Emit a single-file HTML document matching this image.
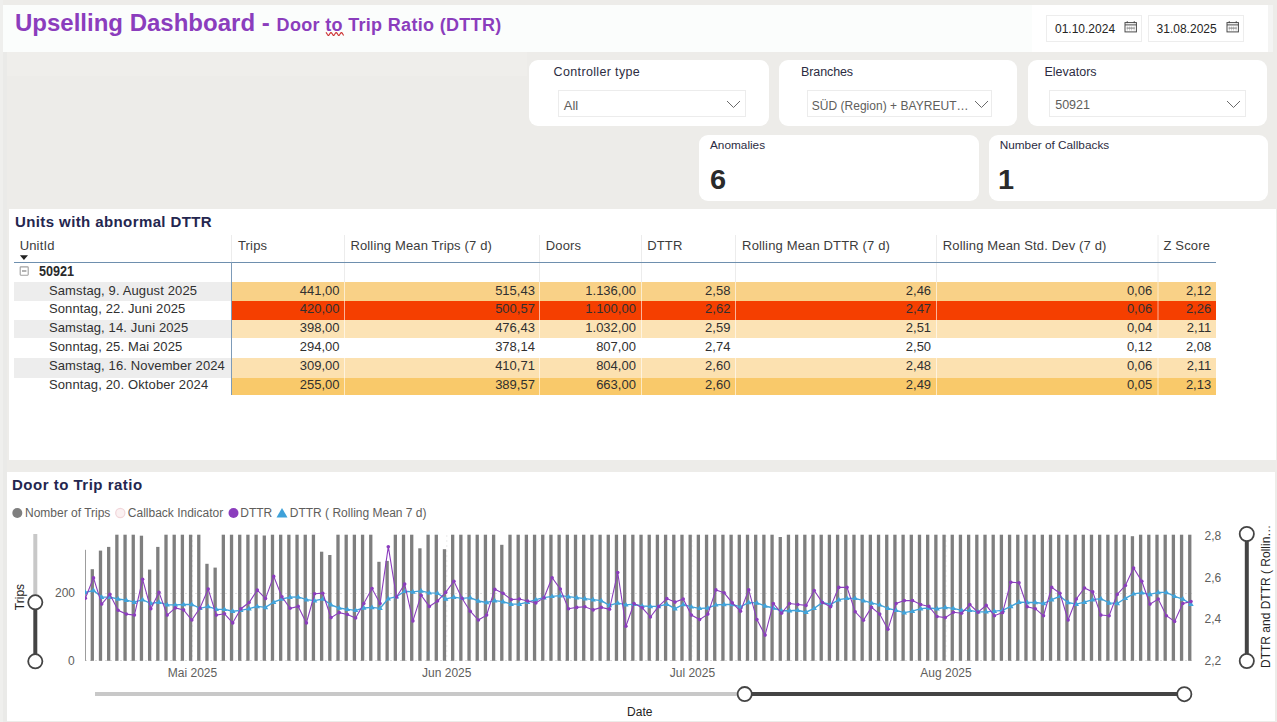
<!DOCTYPE html>
<html><head><meta charset="utf-8"><title>Upselling Dashboard</title>
<style>
html,body{margin:0;padding:0;width:1277px;height:722px;overflow:hidden;background:#edece9;font-family:"Liberation Sans",sans-serif;}
body{position:relative;}
</style></head><body>
<div style="position:absolute;left:0;top:0;width:3px;height:722px;background:#efefed"></div>
<div style="position:absolute;left:3px;top:52px;width:4px;height:670px;background:#eaeae8"></div>
<div style="position:absolute;left:7px;top:52px;width:520px;height:24px;background:#efeeeb"></div>
<div style="position:absolute;left:3px;top:5px;width:1265px;height:47px;background:#fbfdfc"></div>
<div style="position:absolute;left:1032px;top:5px;width:236px;height:47px;background:#ffffff"></div>
<div style="position:absolute;left:1268px;top:5px;width:5px;height:47px;background:#f4f4f3"></div>
<div style="position:absolute;left:15.00px;top:11.08px;font-size:24px;line-height:24px;font-weight:700;color:#8b3dbd;white-space:nowrap;">Upselling Dashboard -</div>
<div style="position:absolute;left:276.60px;top:15.66px;font-size:18px;line-height:18px;font-weight:700;color:#8b3dbd;white-space:nowrap;letter-spacing:0.32px;">Door to Trip Ratio (DTTR)</div>
<svg style="position:absolute;left:0;top:0" width="1277" height="60"><path d="M325.8 32.6 L326.20 32.76 L326.60 33.20 L327.00 33.83 L327.40 34.50 L327.80 35.05 L328.20 35.36 L328.60 35.36 L329.00 35.05 L329.40 34.50 L329.80 33.83 L330.20 33.20 L330.60 32.76 L331.00 32.60 L331.40 32.76 L331.80 33.20 L332.20 33.83 L332.60 34.50 L333.00 35.05 L333.40 35.36 L333.80 35.36 L334.20 35.05 L334.60 34.50 L335.00 33.83 L335.40 33.20 L335.80 32.76 L336.20 32.60 L336.60 32.76 L337.00 33.20 L337.40 33.83 L337.80 34.50 L338.20 35.05 L338.60 35.36 L339.00 35.36 L339.40 35.05 L339.80 34.50 L340.20 33.83 L340.60 33.20 L341.00 32.76 L341.40 32.60 L341.80 32.76 L342.20 33.20 L342.60 33.83 L343.00 34.50 L343.40 35.05 L343.80 35.36" fill="none" stroke="#cc2e2e" stroke-width="1.1"/></svg>
<div style="position:absolute;left:1046px;top:15px;width:94px;height:25px;border:1px solid #ededed;background:#fff"></div>
<div style="position:absolute;left:1055.00px;top:22.64px;font-size:12px;line-height:12px;font-weight:400;color:#252423;white-space:nowrap;">01.10.2024</div>
<svg style="position:absolute;left:1124px;top:20.5px" width="14" height="13" viewBox="0 0 14 13"><rect x="1" y="1.6" width="11.4" height="9.3" fill="none" stroke="#4a4a4a" stroke-width="1"/><line x1="1" y1="3.9" x2="12.4" y2="3.9" stroke="#4a4a4a" stroke-width="1"/><rect x="2.7" y="0.3" width="1.1" height="1.8" fill="#4a4a4a"/><rect x="9.7" y="0.3" width="1.1" height="1.8" fill="#4a4a4a"/><path d="M3.3 5.5v4M5.6 5.5v4M7.6 5.5v4M10.1 5.5v4" stroke="#b8b8b8" stroke-width="0.8"/><path d="M2.6 7.1h8.2" stroke="#8a8a8a" stroke-width="1.1"/></svg>
<div style="position:absolute;left:1147.5px;top:15px;width:94px;height:25px;border:1px solid #ededed;background:#fff"></div>
<div style="position:absolute;left:1156.60px;top:22.64px;font-size:12px;line-height:12px;font-weight:400;color:#252423;white-space:nowrap;">31.08.2025</div>
<svg style="position:absolute;left:1225.6px;top:20.5px" width="14" height="13" viewBox="0 0 14 13"><rect x="1" y="1.6" width="11.4" height="9.3" fill="none" stroke="#4a4a4a" stroke-width="1"/><line x1="1" y1="3.9" x2="12.4" y2="3.9" stroke="#4a4a4a" stroke-width="1"/><rect x="2.7" y="0.3" width="1.1" height="1.8" fill="#4a4a4a"/><rect x="9.7" y="0.3" width="1.1" height="1.8" fill="#4a4a4a"/><path d="M3.3 5.5v4M5.6 5.5v4M7.6 5.5v4M10.1 5.5v4" stroke="#b8b8b8" stroke-width="0.8"/><path d="M2.6 7.1h8.2" stroke="#8a8a8a" stroke-width="1.1"/></svg>
<div style="position:absolute;left:529px;top:60px;width:240px;height:66px;background:#fff;border-radius:9px"></div>
<div style="position:absolute;left:553.60px;top:66.42px;font-size:12.5px;line-height:12.5px;font-weight:400;color:#2c2c42;white-space:nowrap;letter-spacing:0.35px;">Controller type</div>
<div style="position:absolute;left:558px;top:89.5px;width:185.5px;height:25px;border:1px solid #ececec;background:#fff"></div>
<div style="position:absolute;left:563.80px;top:99.00px;font-size:13px;line-height:13px;font-weight:400;color:#605e5c;white-space:nowrap;letter-spacing:0px;">All</div>
<svg style="position:absolute;left:725.6px;top:100px" width="15" height="9"><path d="M1 1 L7.5 7.5 L14 1" fill="none" stroke="#6a6a6a" stroke-width="1"/></svg>
<div style="position:absolute;left:779px;top:60px;width:238px;height:66px;background:#fff;border-radius:9px"></div>
<div style="position:absolute;left:801.00px;top:66.42px;font-size:12.5px;line-height:12.5px;font-weight:400;color:#2c2c42;white-space:nowrap;letter-spacing:-0.1px;">Branches</div>
<div style="position:absolute;left:806.5px;top:89.5px;width:183.5px;height:25px;border:1px solid #ececec;background:#fff"></div>
<div style="position:absolute;left:811.70px;top:99.84px;font-size:12px;line-height:12px;font-weight:400;color:#605e5c;white-space:nowrap;letter-spacing:0.03px;">SÜD (Region) + BAYREUT…</div>
<svg style="position:absolute;left:973.6px;top:100px" width="15" height="9"><path d="M1 1 L7.5 7.5 L14 1" fill="none" stroke="#6a6a6a" stroke-width="1"/></svg>
<div style="position:absolute;left:1028px;top:60px;width:238.5px;height:66px;background:#fff;border-radius:9px"></div>
<div style="position:absolute;left:1044.50px;top:66.42px;font-size:12.5px;line-height:12.5px;font-weight:400;color:#2c2c42;white-space:nowrap;letter-spacing:0px;">Elevators</div>
<div style="position:absolute;left:1049px;top:89.5px;width:194.5px;height:25px;border:1px solid #ececec;background:#fff"></div>
<div style="position:absolute;left:1055.30px;top:99.42px;font-size:12.5px;line-height:12.5px;font-weight:400;color:#605e5c;white-space:nowrap;letter-spacing:-0.05px;">50921</div>
<svg style="position:absolute;left:1225.7px;top:100px" width="15" height="9"><path d="M1 1 L7.5 7.5 L14 1" fill="none" stroke="#6a6a6a" stroke-width="1"/></svg>
<div style="position:absolute;left:699px;top:134.6px;width:280px;height:66.2px;background:#fff;border-radius:9px"></div>
<div style="position:absolute;left:710.00px;top:139.91px;font-size:11.8px;line-height:11.8px;font-weight:400;color:#2c2c42;white-space:nowrap;">Anomalies</div>
<div style="position:absolute;left:709.80px;top:166.64px;font-size:27px;line-height:27px;font-weight:700;color:#2a2a2a;white-space:nowrap;transform:scaleX(1.07);transform-origin:0 0;">6</div>
<div style="position:absolute;left:988.7px;top:134.6px;width:279.5999999999999px;height:66.2px;background:#fff;border-radius:9px"></div>
<div style="position:absolute;left:999.70px;top:139.91px;font-size:11.8px;line-height:11.8px;font-weight:400;color:#2c2c42;white-space:nowrap;">Number of Callbacks</div>
<div style="position:absolute;left:997.80px;top:166.64px;font-size:27px;line-height:27px;font-weight:700;color:#2a2a2a;white-space:nowrap;transform:scaleX(1.07);transform-origin:0 0;">1</div>
<div style="position:absolute;left:9px;top:209px;width:1267px;height:251px;background:#fff"></div>
<div style="position:absolute;left:15.00px;top:213.70px;font-size:15px;line-height:15px;font-weight:700;color:#24264f;white-space:nowrap;letter-spacing:0.4px;">Units with abnormal DTTR</div>
<div style="position:absolute;left:19.70px;top:239.40px;font-size:13px;line-height:13px;font-weight:400;color:#3c3c3c;white-space:nowrap;letter-spacing:0.15px;">UnitId</div>
<div style="position:absolute;left:238.00px;top:239.40px;font-size:13px;line-height:13px;font-weight:400;color:#3c3c3c;white-space:nowrap;letter-spacing:0.15px;">Trips</div>
<div style="position:absolute;left:350.40px;top:239.40px;font-size:13px;line-height:13px;font-weight:400;color:#3c3c3c;white-space:nowrap;letter-spacing:0.15px;">Rolling Mean Trips (7 d)</div>
<div style="position:absolute;left:545.80px;top:239.40px;font-size:13px;line-height:13px;font-weight:400;color:#3c3c3c;white-space:nowrap;letter-spacing:0.15px;">Doors</div>
<div style="position:absolute;left:647.20px;top:239.40px;font-size:13px;line-height:13px;font-weight:400;color:#3c3c3c;white-space:nowrap;letter-spacing:0.15px;">DTTR</div>
<div style="position:absolute;left:742.10px;top:239.40px;font-size:13px;line-height:13px;font-weight:400;color:#3c3c3c;white-space:nowrap;letter-spacing:0.15px;">Rolling Mean DTTR (7 d)</div>
<div style="position:absolute;left:942.80px;top:239.40px;font-size:13px;line-height:13px;font-weight:400;color:#3c3c3c;white-space:nowrap;letter-spacing:0.15px;">Rolling Mean Std. Dev (7 d)</div>
<div style="position:absolute;left:1163.50px;top:239.40px;font-size:13px;line-height:13px;font-weight:400;color:#3c3c3c;white-space:nowrap;letter-spacing:0.15px;">Z Score</div>
<svg style="position:absolute;left:0;top:0" width="1277" height="722">
<path d="M19.9 255.2 L28 255.2 L23.95 259.9 Z" fill="#222"/>
<line x1="344.5" y1="235" x2="344.5" y2="282" stroke="#ececec" stroke-width="1"/>
<line x1="539.5" y1="235" x2="539.5" y2="282" stroke="#ececec" stroke-width="1"/>
<line x1="641.5" y1="235" x2="641.5" y2="282" stroke="#ececec" stroke-width="1"/>
<line x1="735.5" y1="235" x2="735.5" y2="282" stroke="#ececec" stroke-width="1"/>
<line x1="936.5" y1="235" x2="936.5" y2="282" stroke="#ececec" stroke-width="1"/>
<line x1="1158.0" y1="235" x2="1158.0" y2="282" stroke="#ececec" stroke-width="1"/>
<line x1="231.5" y1="235" x2="231.5" y2="263" stroke="#ececec" stroke-width="1"/>
</svg>
<div style="position:absolute;left:14px;top:282px;width:217px;height:19px;background:#ededed"></div>
<div style="position:absolute;left:232px;top:282px;width:984px;height:19px;background:#f9d187"></div>
<div style="position:absolute;left:48.90px;top:283.80px;font-size:13px;line-height:13px;font-weight:400;color:#303030;white-space:nowrap;letter-spacing:0.13px;">Samstag, 9. August 2025</div>
<div style="position:absolute;right:937.50px;text-align:right;top:283.80px;font-size:13px;line-height:13px;font-weight:400;color:#303030;white-space:nowrap;">441,00</div>
<div style="position:absolute;right:742.10px;text-align:right;top:283.80px;font-size:13px;line-height:13px;font-weight:400;color:#303030;white-space:nowrap;">515,43</div>
<div style="position:absolute;right:641.10px;text-align:right;top:283.80px;font-size:13px;line-height:13px;font-weight:400;color:#303030;white-space:nowrap;">1.136,00</div>
<div style="position:absolute;right:546.60px;text-align:right;top:283.80px;font-size:13px;line-height:13px;font-weight:400;color:#303030;white-space:nowrap;">2,58</div>
<div style="position:absolute;right:345.90px;text-align:right;top:283.80px;font-size:13px;line-height:13px;font-weight:400;color:#303030;white-space:nowrap;">2,46</div>
<div style="position:absolute;right:124.80px;text-align:right;top:283.80px;font-size:13px;line-height:13px;font-weight:400;color:#303030;white-space:nowrap;">0,06</div>
<div style="position:absolute;right:65.80px;text-align:right;top:283.80px;font-size:13px;line-height:13px;font-weight:400;color:#303030;white-space:nowrap;">2,12</div>
<div style="position:absolute;left:232px;top:301px;width:984px;height:18.5px;background:#f53f00"></div>
<div style="position:absolute;left:48.90px;top:302.20px;font-size:13px;line-height:13px;font-weight:400;color:#303030;white-space:nowrap;letter-spacing:0.13px;">Sonntag, 22. Juni 2025</div>
<div style="position:absolute;right:937.50px;text-align:right;top:302.20px;font-size:13px;line-height:13px;font-weight:400;color:#303030;white-space:nowrap;">420,00</div>
<div style="position:absolute;right:742.10px;text-align:right;top:302.20px;font-size:13px;line-height:13px;font-weight:400;color:#303030;white-space:nowrap;">500,57</div>
<div style="position:absolute;right:641.10px;text-align:right;top:302.20px;font-size:13px;line-height:13px;font-weight:400;color:#303030;white-space:nowrap;">1.100,00</div>
<div style="position:absolute;right:546.60px;text-align:right;top:302.20px;font-size:13px;line-height:13px;font-weight:400;color:#303030;white-space:nowrap;">2,62</div>
<div style="position:absolute;right:345.90px;text-align:right;top:302.20px;font-size:13px;line-height:13px;font-weight:400;color:#303030;white-space:nowrap;">2,47</div>
<div style="position:absolute;right:124.80px;text-align:right;top:302.20px;font-size:13px;line-height:13px;font-weight:400;color:#303030;white-space:nowrap;">0,06</div>
<div style="position:absolute;right:65.80px;text-align:right;top:302.20px;font-size:13px;line-height:13px;font-weight:400;color:#303030;white-space:nowrap;">2,26</div>
<div style="position:absolute;left:14px;top:319.5px;width:217px;height:18.5px;background:#ededed"></div>
<div style="position:absolute;left:232px;top:319.5px;width:984px;height:18.5px;background:#fce3b5"></div>
<div style="position:absolute;left:48.90px;top:321.30px;font-size:13px;line-height:13px;font-weight:400;color:#303030;white-space:nowrap;letter-spacing:0.13px;">Samstag, 14. Juni 2025</div>
<div style="position:absolute;right:937.50px;text-align:right;top:321.30px;font-size:13px;line-height:13px;font-weight:400;color:#303030;white-space:nowrap;">398,00</div>
<div style="position:absolute;right:742.10px;text-align:right;top:321.30px;font-size:13px;line-height:13px;font-weight:400;color:#303030;white-space:nowrap;">476,43</div>
<div style="position:absolute;right:641.10px;text-align:right;top:321.30px;font-size:13px;line-height:13px;font-weight:400;color:#303030;white-space:nowrap;">1.032,00</div>
<div style="position:absolute;right:546.60px;text-align:right;top:321.30px;font-size:13px;line-height:13px;font-weight:400;color:#303030;white-space:nowrap;">2,59</div>
<div style="position:absolute;right:345.90px;text-align:right;top:321.30px;font-size:13px;line-height:13px;font-weight:400;color:#303030;white-space:nowrap;">2,51</div>
<div style="position:absolute;right:124.80px;text-align:right;top:321.30px;font-size:13px;line-height:13px;font-weight:400;color:#303030;white-space:nowrap;">0,04</div>
<div style="position:absolute;right:65.80px;text-align:right;top:321.30px;font-size:13px;line-height:13px;font-weight:400;color:#303030;white-space:nowrap;">2,11</div>
<div style="position:absolute;left:232px;top:338px;width:984px;height:19.5px;background:#ffffff"></div>
<div style="position:absolute;left:48.90px;top:340.00px;font-size:13px;line-height:13px;font-weight:400;color:#303030;white-space:nowrap;letter-spacing:0.13px;">Sonntag, 25. Mai 2025</div>
<div style="position:absolute;right:937.50px;text-align:right;top:340.00px;font-size:13px;line-height:13px;font-weight:400;color:#303030;white-space:nowrap;">294,00</div>
<div style="position:absolute;right:742.10px;text-align:right;top:340.00px;font-size:13px;line-height:13px;font-weight:400;color:#303030;white-space:nowrap;">378,14</div>
<div style="position:absolute;right:641.10px;text-align:right;top:340.00px;font-size:13px;line-height:13px;font-weight:400;color:#303030;white-space:nowrap;">807,00</div>
<div style="position:absolute;right:546.60px;text-align:right;top:340.00px;font-size:13px;line-height:13px;font-weight:400;color:#303030;white-space:nowrap;">2,74</div>
<div style="position:absolute;right:345.90px;text-align:right;top:340.00px;font-size:13px;line-height:13px;font-weight:400;color:#303030;white-space:nowrap;">2,50</div>
<div style="position:absolute;right:124.80px;text-align:right;top:340.00px;font-size:13px;line-height:13px;font-weight:400;color:#303030;white-space:nowrap;">0,12</div>
<div style="position:absolute;right:65.80px;text-align:right;top:340.00px;font-size:13px;line-height:13px;font-weight:400;color:#303030;white-space:nowrap;">2,08</div>
<div style="position:absolute;left:14px;top:357.5px;width:217px;height:20.0px;background:#ededed"></div>
<div style="position:absolute;left:232px;top:357.5px;width:984px;height:20.0px;background:#fce1b0"></div>
<div style="position:absolute;left:48.90px;top:358.90px;font-size:13px;line-height:13px;font-weight:400;color:#303030;white-space:nowrap;letter-spacing:0.13px;">Samstag, 16. November 2024</div>
<div style="position:absolute;right:937.50px;text-align:right;top:358.90px;font-size:13px;line-height:13px;font-weight:400;color:#303030;white-space:nowrap;">309,00</div>
<div style="position:absolute;right:742.10px;text-align:right;top:358.90px;font-size:13px;line-height:13px;font-weight:400;color:#303030;white-space:nowrap;">410,71</div>
<div style="position:absolute;right:641.10px;text-align:right;top:358.90px;font-size:13px;line-height:13px;font-weight:400;color:#303030;white-space:nowrap;">804,00</div>
<div style="position:absolute;right:546.60px;text-align:right;top:358.90px;font-size:13px;line-height:13px;font-weight:400;color:#303030;white-space:nowrap;">2,60</div>
<div style="position:absolute;right:345.90px;text-align:right;top:358.90px;font-size:13px;line-height:13px;font-weight:400;color:#303030;white-space:nowrap;">2,48</div>
<div style="position:absolute;right:124.80px;text-align:right;top:358.90px;font-size:13px;line-height:13px;font-weight:400;color:#303030;white-space:nowrap;">0,06</div>
<div style="position:absolute;right:65.80px;text-align:right;top:358.90px;font-size:13px;line-height:13px;font-weight:400;color:#303030;white-space:nowrap;">2,11</div>
<div style="position:absolute;left:232px;top:377.5px;width:984px;height:17.5px;background:#f9c96a"></div>
<div style="position:absolute;left:48.90px;top:377.50px;font-size:13px;line-height:13px;font-weight:400;color:#303030;white-space:nowrap;letter-spacing:0.13px;">Sonntag, 20. Oktober 2024</div>
<div style="position:absolute;right:937.50px;text-align:right;top:377.50px;font-size:13px;line-height:13px;font-weight:400;color:#303030;white-space:nowrap;">255,00</div>
<div style="position:absolute;right:742.10px;text-align:right;top:377.50px;font-size:13px;line-height:13px;font-weight:400;color:#303030;white-space:nowrap;">389,57</div>
<div style="position:absolute;right:641.10px;text-align:right;top:377.50px;font-size:13px;line-height:13px;font-weight:400;color:#303030;white-space:nowrap;">663,00</div>
<div style="position:absolute;right:546.60px;text-align:right;top:377.50px;font-size:13px;line-height:13px;font-weight:400;color:#303030;white-space:nowrap;">2,60</div>
<div style="position:absolute;right:345.90px;text-align:right;top:377.50px;font-size:13px;line-height:13px;font-weight:400;color:#303030;white-space:nowrap;">2,49</div>
<div style="position:absolute;right:124.80px;text-align:right;top:377.50px;font-size:13px;line-height:13px;font-weight:400;color:#303030;white-space:nowrap;">0,05</div>
<div style="position:absolute;right:65.80px;text-align:right;top:377.50px;font-size:13px;line-height:13px;font-weight:400;color:#303030;white-space:nowrap;">2,13</div>
<svg style="position:absolute;left:0;top:0" width="1277" height="722">
<line x1="344.5" y1="282" x2="344.5" y2="395" stroke="#ffffff" stroke-opacity="0.6" stroke-width="1"/>
<line x1="539.5" y1="282" x2="539.5" y2="395" stroke="#ffffff" stroke-opacity="0.6" stroke-width="1"/>
<line x1="641.5" y1="282" x2="641.5" y2="395" stroke="#ffffff" stroke-opacity="0.6" stroke-width="1"/>
<line x1="735.5" y1="282" x2="735.5" y2="395" stroke="#ffffff" stroke-opacity="0.6" stroke-width="1"/>
<line x1="936.5" y1="282" x2="936.5" y2="395" stroke="#ffffff" stroke-opacity="0.6" stroke-width="1"/>
<line x1="1158.0" y1="282" x2="1158.0" y2="395" stroke="#ffffff" stroke-opacity="0.6" stroke-width="1"/>
<line x1="14" y1="262.5" x2="1216" y2="262.5" stroke="#6e8fae" stroke-width="1"/>
<line x1="231.5" y1="262" x2="231.5" y2="395" stroke="#7d9bb8" stroke-width="1"/>
<rect x="20.2" y="266.9" width="8" height="8.3" rx="0.6" fill="none" stroke="#a0a0a0" stroke-width="1.1"/><line x1="22" y1="271" x2="26.4" y2="271" stroke="#8a8a8a" stroke-width="1.3"/>
</svg>
<div style="position:absolute;left:38.60px;top:264.15px;font-size:14px;line-height:14px;font-weight:700;color:#2a2a2a;white-space:nowrap;transform:scaleX(0.9);transform-origin:0 0;">50921</div>
<div style="position:absolute;left:7px;top:472px;width:1268px;height:249px;background:#fff"></div>
<div style="position:absolute;left:12.00px;top:477.30px;font-size:15px;line-height:15px;font-weight:700;color:#24264f;white-space:nowrap;letter-spacing:0.5px;">Door to Trip ratio</div>
<svg style="position:absolute;left:0;top:0" width="1277" height="722">
<circle cx="17.3" cy="513" r="5" fill="#7f7f7f"/>
<circle cx="120.3" cy="513" r="4.6" fill="#fbf1f2" stroke="#f1d6da" stroke-width="1.2"/>
<circle cx="233.5" cy="513" r="5" fill="#8b3dbd"/>
<path d="M282 508 L287.5 517.5 L276.5 517.5 Z" fill="#3ea1d9"/>
</svg>
<div style="position:absolute;left:25.00px;top:506.54px;font-size:12px;line-height:12px;font-weight:400;color:#605e5c;white-space:nowrap;">Nomber of Trips</div>
<div style="position:absolute;left:127.80px;top:506.54px;font-size:12px;line-height:12px;font-weight:400;color:#605e5c;white-space:nowrap;">Callback Indicator</div>
<div style="position:absolute;left:240.30px;top:506.54px;font-size:12px;line-height:12px;font-weight:400;color:#605e5c;white-space:nowrap;">DTTR</div>
<div style="position:absolute;left:289.80px;top:506.54px;font-size:12px;line-height:12px;font-weight:400;color:#605e5c;white-space:nowrap;">DTTR ( Rolling Mean 7 d)</div>
<svg style="position:absolute;left:0;top:0" width="1277" height="722">
<defs><clipPath id="pc"><rect x="85" y="534.4" width="1110" height="131"/></clipPath></defs>
<line x1="85" y1="593.5" x2="1194" y2="593.5" stroke="#e0e0e0" stroke-width="1" stroke-dasharray="2,3"/>
<line x1="85" y1="660.5" x2="1192" y2="660.5" stroke="#dcdcdc" stroke-width="1" stroke-dasharray="2,3"/>
<line x1="192.5" y1="535" x2="192.5" y2="660" stroke="#ebebeb" stroke-width="1" stroke-dasharray="2,3"/>
<line x1="446.8" y1="535" x2="446.8" y2="660" stroke="#ebebeb" stroke-width="1" stroke-dasharray="2,3"/>
<line x1="692" y1="535" x2="692" y2="660" stroke="#ebebeb" stroke-width="1" stroke-dasharray="2,3"/>
<line x1="946" y1="535" x2="946" y2="660" stroke="#ebebeb" stroke-width="1" stroke-dasharray="2,3"/>
<g clip-path="url(#pc)" fill="#7f7f7f">
<rect x="82.46" y="549.8" width="3.3" height="111.0"/>
<rect x="90.65" y="569.2" width="3.3" height="91.6"/>
<rect x="98.84" y="550.6" width="3.3" height="110.2"/>
<rect x="107.03" y="546.9" width="3.3" height="113.9"/>
<rect x="115.22" y="534.4" width="3.3" height="126.4"/>
<rect x="123.41" y="534.4" width="3.3" height="126.4"/>
<rect x="131.60" y="534.4" width="3.3" height="126.4"/>
<rect x="139.79" y="535.7" width="3.3" height="125.1"/>
<rect x="147.98" y="569.6" width="3.3" height="91.2"/>
<rect x="156.17" y="546.9" width="3.3" height="113.9"/>
<rect x="164.36" y="534.4" width="3.3" height="126.4"/>
<rect x="172.55" y="534.4" width="3.3" height="126.4"/>
<rect x="180.74" y="534.4" width="3.3" height="126.4"/>
<rect x="188.93" y="534.4" width="3.3" height="126.4"/>
<rect x="197.12" y="534.4" width="3.3" height="126.4"/>
<rect x="205.31" y="563.8" width="3.3" height="97.0"/>
<rect x="213.50" y="567.6" width="3.3" height="93.2"/>
<rect x="221.69" y="534.4" width="3.3" height="126.4"/>
<rect x="229.88" y="534.4" width="3.3" height="126.4"/>
<rect x="238.07" y="534.4" width="3.3" height="126.4"/>
<rect x="246.26" y="534.4" width="3.3" height="126.4"/>
<rect x="254.45" y="534.4" width="3.3" height="126.4"/>
<rect x="262.64" y="535.5" width="3.3" height="125.3"/>
<rect x="270.83" y="534.4" width="3.3" height="126.4"/>
<rect x="279.02" y="534.4" width="3.3" height="126.4"/>
<rect x="287.21" y="534.4" width="3.3" height="126.4"/>
<rect x="295.40" y="534.4" width="3.3" height="126.4"/>
<rect x="303.59" y="534.4" width="3.3" height="126.4"/>
<rect x="311.78" y="534.4" width="3.3" height="126.4"/>
<rect x="319.97" y="551.7" width="3.3" height="109.1"/>
<rect x="328.16" y="555.0" width="3.3" height="105.8"/>
<rect x="336.35" y="534.4" width="3.3" height="126.4"/>
<rect x="344.54" y="534.4" width="3.3" height="126.4"/>
<rect x="352.73" y="534.4" width="3.3" height="126.4"/>
<rect x="360.92" y="534.4" width="3.3" height="126.4"/>
<rect x="369.11" y="534.4" width="3.3" height="126.4"/>
<rect x="377.30" y="561.8" width="3.3" height="99.0"/>
<rect x="385.49" y="560.9" width="3.3" height="99.9"/>
<rect x="393.68" y="534.4" width="3.3" height="126.4"/>
<rect x="401.87" y="534.4" width="3.3" height="126.4"/>
<rect x="410.06" y="534.4" width="3.3" height="126.4"/>
<rect x="418.25" y="548.3" width="3.3" height="112.5"/>
<rect x="426.44" y="534.4" width="3.3" height="126.4"/>
<rect x="434.63" y="534.4" width="3.3" height="126.4"/>
<rect x="442.82" y="549.2" width="3.3" height="111.6"/>
<rect x="451.01" y="534.4" width="3.3" height="126.4"/>
<rect x="459.20" y="534.4" width="3.3" height="126.4"/>
<rect x="467.39" y="534.4" width="3.3" height="126.4"/>
<rect x="475.58" y="534.4" width="3.3" height="126.4"/>
<rect x="483.77" y="534.4" width="3.3" height="126.4"/>
<rect x="491.96" y="534.4" width="3.3" height="126.4"/>
<rect x="500.15" y="544.8" width="3.3" height="116.0"/>
<rect x="508.34" y="534.4" width="3.3" height="126.4"/>
<rect x="516.53" y="534.4" width="3.3" height="126.4"/>
<rect x="524.72" y="534.4" width="3.3" height="126.4"/>
<rect x="532.91" y="534.4" width="3.3" height="126.4"/>
<rect x="541.10" y="534.4" width="3.3" height="126.4"/>
<rect x="549.29" y="534.4" width="3.3" height="126.4"/>
<rect x="557.48" y="534.4" width="3.3" height="126.4"/>
<rect x="565.67" y="534.4" width="3.3" height="126.4"/>
<rect x="573.86" y="534.4" width="3.3" height="126.4"/>
<rect x="582.05" y="534.4" width="3.3" height="126.4"/>
<rect x="590.24" y="534.4" width="3.3" height="126.4"/>
<rect x="598.43" y="534.4" width="3.3" height="126.4"/>
<rect x="606.62" y="534.4" width="3.3" height="126.4"/>
<rect x="614.81" y="534.4" width="3.3" height="126.4"/>
<rect x="623.00" y="534.4" width="3.3" height="126.4"/>
<rect x="631.19" y="534.4" width="3.3" height="126.4"/>
<rect x="639.38" y="534.4" width="3.3" height="126.4"/>
<rect x="647.57" y="534.4" width="3.3" height="126.4"/>
<rect x="655.76" y="534.4" width="3.3" height="126.4"/>
<rect x="663.95" y="534.4" width="3.3" height="126.4"/>
<rect x="672.14" y="534.4" width="3.3" height="126.4"/>
<rect x="680.33" y="534.4" width="3.3" height="126.4"/>
<rect x="688.52" y="534.4" width="3.3" height="126.4"/>
<rect x="696.71" y="534.4" width="3.3" height="126.4"/>
<rect x="704.90" y="534.4" width="3.3" height="126.4"/>
<rect x="713.09" y="534.4" width="3.3" height="126.4"/>
<rect x="721.28" y="534.4" width="3.3" height="126.4"/>
<rect x="729.47" y="534.4" width="3.3" height="126.4"/>
<rect x="737.66" y="534.4" width="3.3" height="126.4"/>
<rect x="745.85" y="534.4" width="3.3" height="126.4"/>
<rect x="754.04" y="534.4" width="3.3" height="126.4"/>
<rect x="762.23" y="534.4" width="3.3" height="126.4"/>
<rect x="770.42" y="534.4" width="3.3" height="126.4"/>
<rect x="778.61" y="537.0" width="3.3" height="123.8"/>
<rect x="786.80" y="534.4" width="3.3" height="126.4"/>
<rect x="794.99" y="534.4" width="3.3" height="126.4"/>
<rect x="803.18" y="534.4" width="3.3" height="126.4"/>
<rect x="811.37" y="534.4" width="3.3" height="126.4"/>
<rect x="819.56" y="534.4" width="3.3" height="126.4"/>
<rect x="827.75" y="534.4" width="3.3" height="126.4"/>
<rect x="835.94" y="534.4" width="3.3" height="126.4"/>
<rect x="844.13" y="534.4" width="3.3" height="126.4"/>
<rect x="852.32" y="534.4" width="3.3" height="126.4"/>
<rect x="860.51" y="534.4" width="3.3" height="126.4"/>
<rect x="868.70" y="534.4" width="3.3" height="126.4"/>
<rect x="876.89" y="534.4" width="3.3" height="126.4"/>
<rect x="885.08" y="534.4" width="3.3" height="126.4"/>
<rect x="893.27" y="534.4" width="3.3" height="126.4"/>
<rect x="901.46" y="534.4" width="3.3" height="126.4"/>
<rect x="909.65" y="534.4" width="3.3" height="126.4"/>
<rect x="917.84" y="534.4" width="3.3" height="126.4"/>
<rect x="926.03" y="534.4" width="3.3" height="126.4"/>
<rect x="934.22" y="534.4" width="3.3" height="126.4"/>
<rect x="942.41" y="534.4" width="3.3" height="126.4"/>
<rect x="950.60" y="534.4" width="3.3" height="126.4"/>
<rect x="958.79" y="534.4" width="3.3" height="126.4"/>
<rect x="966.98" y="534.4" width="3.3" height="126.4"/>
<rect x="975.17" y="534.4" width="3.3" height="126.4"/>
<rect x="983.36" y="534.4" width="3.3" height="126.4"/>
<rect x="991.55" y="534.4" width="3.3" height="126.4"/>
<rect x="999.74" y="534.4" width="3.3" height="126.4"/>
<rect x="1007.93" y="534.4" width="3.3" height="126.4"/>
<rect x="1016.12" y="534.4" width="3.3" height="126.4"/>
<rect x="1024.31" y="534.4" width="3.3" height="126.4"/>
<rect x="1032.50" y="534.4" width="3.3" height="126.4"/>
<rect x="1040.69" y="534.4" width="3.3" height="126.4"/>
<rect x="1048.88" y="534.4" width="3.3" height="126.4"/>
<rect x="1057.07" y="534.4" width="3.3" height="126.4"/>
<rect x="1065.26" y="534.4" width="3.3" height="126.4"/>
<rect x="1073.45" y="534.4" width="3.3" height="126.4"/>
<rect x="1081.64" y="534.4" width="3.3" height="126.4"/>
<rect x="1089.83" y="534.4" width="3.3" height="126.4"/>
<rect x="1098.02" y="534.4" width="3.3" height="126.4"/>
<rect x="1106.21" y="534.4" width="3.3" height="126.4"/>
<rect x="1114.40" y="534.4" width="3.3" height="126.4"/>
<rect x="1122.59" y="534.4" width="3.3" height="126.4"/>
<rect x="1130.78" y="536.2" width="3.3" height="124.6"/>
<rect x="1138.97" y="534.4" width="3.3" height="126.4"/>
<rect x="1147.16" y="534.4" width="3.3" height="126.4"/>
<rect x="1155.35" y="534.4" width="3.3" height="126.4"/>
<rect x="1163.54" y="534.4" width="3.3" height="126.4"/>
<rect x="1171.73" y="534.4" width="3.3" height="126.4"/>
<rect x="1179.92" y="534.4" width="3.3" height="126.4"/>
<rect x="1188.11" y="534.4" width="3.3" height="126.4"/>
</g>
<g clip-path="url(#pc)">
<polyline points="85.3,592.4 93.5,590.5 101.7,597.1 109.9,597.1 118.1,599.0 126.3,600.2 134.4,602.1 142.6,599.6 150.8,603.5 159.0,602.1 167.2,604.8 175.4,604.8 183.6,604.5 191.8,604.5 200.0,608.3 208.2,606.4 216.3,609.3 224.5,609.3 232.7,611.2 240.9,610.3 249.1,608.7 257.3,606.4 265.5,607.4 273.7,602.1 281.9,599.0 290.1,597.1 298.2,596.9 306.4,599.6 314.6,600.6 322.8,599.0 331.0,604.8 339.2,608.0 347.4,609.3 355.6,610.3 363.8,608.0 372.0,607.4 380.1,608.3 388.3,598.6 396.5,596.7 404.7,591.3 412.9,591.9 421.1,590.9 429.3,592.8 437.5,593.2 445.7,599.0 453.9,597.1 462.0,598.3 470.2,597.7 478.4,601.0 486.6,602.5 494.8,600.6 503.0,601.6 511.2,604.1 519.4,604.1 527.6,602.1 535.8,599.6 544.0,597.7 552.1,596.3 560.3,595.7 568.5,596.7 576.7,597.7 584.9,598.6 593.1,599.6 601.3,600.6 609.5,605.4 617.7,602.9 625.9,604.8 634.0,604.1 642.2,606.0 650.4,606.4 658.6,606.4 666.8,604.1 675.0,608.7 683.2,604.5 691.4,606.8 699.6,608.3 707.8,608.0 715.9,604.8 724.1,604.5 732.3,604.5 740.5,606.8 748.7,602.5 756.9,602.9 765.1,606.0 773.3,608.0 781.5,610.7 789.6,610.7 797.8,610.3 806.0,612.2 814.2,608.3 822.4,602.5 830.6,604.5 838.8,599.6 847.0,598.3 855.2,598.3 863.4,600.6 871.5,602.9 879.7,604.8 887.9,608.3 896.1,610.3 904.3,612.6 912.5,611.2 920.7,608.7 928.9,608.0 937.1,608.7 945.3,607.4 953.4,608.3 961.6,610.3 969.8,610.3 978.0,611.8 986.2,611.8 994.4,611.2 1002.6,610.3 1010.8,606.4 1019.0,602.1 1027.2,602.5 1035.3,602.5 1043.5,603.5 1051.7,599.6 1059.9,596.3 1068.1,602.5 1076.3,604.1 1084.5,602.1 1092.7,599.6 1100.9,598.6 1109.1,602.9 1117.2,603.5 1125.4,598.3 1133.6,593.8 1141.8,592.8 1150.0,594.4 1158.2,592.4 1166.4,592.4 1174.6,596.3 1182.8,599.0 1191.0,604.1" fill="none" stroke="#41a3da" stroke-width="1.35"/>
<path d="M85.3 589.5 L88.0 594.2 L82.6 594.2 Z" fill="#41a3da"/>
<path d="M93.5 587.6 L96.2 592.3 L90.8 592.3 Z" fill="#41a3da"/>
<path d="M101.7 594.2 L104.4 598.9 L99.0 598.9 Z" fill="#41a3da"/>
<path d="M109.9 594.2 L112.6 598.9 L107.2 598.9 Z" fill="#41a3da"/>
<path d="M118.1 596.1 L120.8 600.8 L115.4 600.8 Z" fill="#41a3da"/>
<path d="M126.3 597.3 L129.0 602.0 L123.6 602.0 Z" fill="#41a3da"/>
<path d="M134.4 599.2 L137.1 603.9 L131.8 603.9 Z" fill="#41a3da"/>
<path d="M142.6 596.7 L145.3 601.4 L139.9 601.4 Z" fill="#41a3da"/>
<path d="M150.8 600.6 L153.5 605.3 L148.1 605.3 Z" fill="#41a3da"/>
<path d="M159.0 599.2 L161.7 603.9 L156.3 603.9 Z" fill="#41a3da"/>
<path d="M167.2 601.9 L169.9 606.6 L164.5 606.6 Z" fill="#41a3da"/>
<path d="M175.4 601.9 L178.1 606.6 L172.7 606.6 Z" fill="#41a3da"/>
<path d="M183.6 601.6 L186.3 606.3 L180.9 606.3 Z" fill="#41a3da"/>
<path d="M191.8 601.6 L194.5 606.3 L189.1 606.3 Z" fill="#41a3da"/>
<path d="M200.0 605.4 L202.7 610.1 L197.3 610.1 Z" fill="#41a3da"/>
<path d="M208.2 603.5 L210.9 608.2 L205.5 608.2 Z" fill="#41a3da"/>
<path d="M216.3 606.4 L219.0 611.1 L213.6 611.1 Z" fill="#41a3da"/>
<path d="M224.5 606.4 L227.2 611.1 L221.8 611.1 Z" fill="#41a3da"/>
<path d="M232.7 608.3 L235.4 613.0 L230.0 613.0 Z" fill="#41a3da"/>
<path d="M240.9 607.4 L243.6 612.1 L238.2 612.1 Z" fill="#41a3da"/>
<path d="M249.1 605.8 L251.8 610.5 L246.4 610.5 Z" fill="#41a3da"/>
<path d="M257.3 603.5 L260.0 608.2 L254.6 608.2 Z" fill="#41a3da"/>
<path d="M265.5 604.5 L268.2 609.2 L262.8 609.2 Z" fill="#41a3da"/>
<path d="M273.7 599.2 L276.4 603.9 L271.0 603.9 Z" fill="#41a3da"/>
<path d="M281.9 596.1 L284.6 600.8 L279.2 600.8 Z" fill="#41a3da"/>
<path d="M290.1 594.2 L292.8 598.9 L287.4 598.9 Z" fill="#41a3da"/>
<path d="M298.2 594.0 L300.9 598.7 L295.6 598.7 Z" fill="#41a3da"/>
<path d="M306.4 596.7 L309.1 601.4 L303.7 601.4 Z" fill="#41a3da"/>
<path d="M314.6 597.7 L317.3 602.4 L311.9 602.4 Z" fill="#41a3da"/>
<path d="M322.8 596.1 L325.5 600.8 L320.1 600.8 Z" fill="#41a3da"/>
<path d="M331.0 601.9 L333.7 606.6 L328.3 606.6 Z" fill="#41a3da"/>
<path d="M339.2 605.1 L341.9 609.8 L336.5 609.8 Z" fill="#41a3da"/>
<path d="M347.4 606.4 L350.1 611.1 L344.7 611.1 Z" fill="#41a3da"/>
<path d="M355.6 607.4 L358.3 612.1 L352.9 612.1 Z" fill="#41a3da"/>
<path d="M363.8 605.1 L366.5 609.8 L361.1 609.8 Z" fill="#41a3da"/>
<path d="M372.0 604.5 L374.7 609.2 L369.3 609.2 Z" fill="#41a3da"/>
<path d="M380.1 605.4 L382.8 610.1 L377.4 610.1 Z" fill="#41a3da"/>
<path d="M388.3 595.7 L391.0 600.4 L385.6 600.4 Z" fill="#41a3da"/>
<path d="M396.5 593.8 L399.2 598.5 L393.8 598.5 Z" fill="#41a3da"/>
<path d="M404.7 588.4 L407.4 593.1 L402.0 593.1 Z" fill="#41a3da"/>
<path d="M412.9 589.0 L415.6 593.7 L410.2 593.7 Z" fill="#41a3da"/>
<path d="M421.1 588.0 L423.8 592.7 L418.4 592.7 Z" fill="#41a3da"/>
<path d="M429.3 589.9 L432.0 594.6 L426.6 594.6 Z" fill="#41a3da"/>
<path d="M437.5 590.3 L440.2 595.0 L434.8 595.0 Z" fill="#41a3da"/>
<path d="M445.7 596.1 L448.4 600.8 L443.0 600.8 Z" fill="#41a3da"/>
<path d="M453.9 594.2 L456.6 598.9 L451.2 598.9 Z" fill="#41a3da"/>
<path d="M462.0 595.4 L464.7 600.1 L459.3 600.1 Z" fill="#41a3da"/>
<path d="M470.2 594.8 L472.9 599.5 L467.5 599.5 Z" fill="#41a3da"/>
<path d="M478.4 598.1 L481.1 602.8 L475.7 602.8 Z" fill="#41a3da"/>
<path d="M486.6 599.6 L489.3 604.3 L483.9 604.3 Z" fill="#41a3da"/>
<path d="M494.8 597.7 L497.5 602.4 L492.1 602.4 Z" fill="#41a3da"/>
<path d="M503.0 598.7 L505.7 603.4 L500.3 603.4 Z" fill="#41a3da"/>
<path d="M511.2 601.2 L513.9 605.9 L508.5 605.9 Z" fill="#41a3da"/>
<path d="M519.4 601.2 L522.1 605.9 L516.7 605.9 Z" fill="#41a3da"/>
<path d="M527.6 599.2 L530.3 603.9 L524.9 603.9 Z" fill="#41a3da"/>
<path d="M535.8 596.7 L538.5 601.4 L533.1 601.4 Z" fill="#41a3da"/>
<path d="M544.0 594.8 L546.7 599.5 L541.2 599.5 Z" fill="#41a3da"/>
<path d="M552.1 593.4 L554.8 598.1 L549.4 598.1 Z" fill="#41a3da"/>
<path d="M560.3 592.8 L563.0 597.5 L557.6 597.5 Z" fill="#41a3da"/>
<path d="M568.5 593.8 L571.2 598.5 L565.8 598.5 Z" fill="#41a3da"/>
<path d="M576.7 594.8 L579.4 599.5 L574.0 599.5 Z" fill="#41a3da"/>
<path d="M584.9 595.7 L587.6 600.4 L582.2 600.4 Z" fill="#41a3da"/>
<path d="M593.1 596.7 L595.8 601.4 L590.4 601.4 Z" fill="#41a3da"/>
<path d="M601.3 597.7 L604.0 602.4 L598.6 602.4 Z" fill="#41a3da"/>
<path d="M609.5 602.5 L612.2 607.2 L606.8 607.2 Z" fill="#41a3da"/>
<path d="M617.7 600.0 L620.4 604.7 L615.0 604.7 Z" fill="#41a3da"/>
<path d="M625.9 601.9 L628.6 606.6 L623.1 606.6 Z" fill="#41a3da"/>
<path d="M634.0 601.2 L636.7 605.9 L631.3 605.9 Z" fill="#41a3da"/>
<path d="M642.2 603.1 L644.9 607.8 L639.5 607.8 Z" fill="#41a3da"/>
<path d="M650.4 603.5 L653.1 608.2 L647.7 608.2 Z" fill="#41a3da"/>
<path d="M658.6 603.5 L661.3 608.2 L655.9 608.2 Z" fill="#41a3da"/>
<path d="M666.8 601.2 L669.5 605.9 L664.1 605.9 Z" fill="#41a3da"/>
<path d="M675.0 605.8 L677.7 610.5 L672.3 610.5 Z" fill="#41a3da"/>
<path d="M683.2 601.6 L685.9 606.3 L680.5 606.3 Z" fill="#41a3da"/>
<path d="M691.4 603.9 L694.1 608.6 L688.7 608.6 Z" fill="#41a3da"/>
<path d="M699.6 605.4 L702.3 610.1 L696.9 610.1 Z" fill="#41a3da"/>
<path d="M707.8 605.1 L710.5 609.8 L705.0 609.8 Z" fill="#41a3da"/>
<path d="M715.9 601.9 L718.6 606.6 L713.2 606.6 Z" fill="#41a3da"/>
<path d="M724.1 601.6 L726.8 606.3 L721.4 606.3 Z" fill="#41a3da"/>
<path d="M732.3 601.6 L735.0 606.3 L729.6 606.3 Z" fill="#41a3da"/>
<path d="M740.5 603.9 L743.2 608.6 L737.8 608.6 Z" fill="#41a3da"/>
<path d="M748.7 599.6 L751.4 604.3 L746.0 604.3 Z" fill="#41a3da"/>
<path d="M756.9 600.0 L759.6 604.7 L754.2 604.7 Z" fill="#41a3da"/>
<path d="M765.1 603.1 L767.8 607.8 L762.4 607.8 Z" fill="#41a3da"/>
<path d="M773.3 605.1 L776.0 609.8 L770.6 609.8 Z" fill="#41a3da"/>
<path d="M781.5 607.8 L784.2 612.5 L778.8 612.5 Z" fill="#41a3da"/>
<path d="M789.6 607.8 L792.4 612.5 L786.9 612.5 Z" fill="#41a3da"/>
<path d="M797.8 607.4 L800.5 612.1 L795.1 612.1 Z" fill="#41a3da"/>
<path d="M806.0 609.3 L808.7 614.0 L803.3 614.0 Z" fill="#41a3da"/>
<path d="M814.2 605.4 L816.9 610.1 L811.5 610.1 Z" fill="#41a3da"/>
<path d="M822.4 599.6 L825.1 604.3 L819.7 604.3 Z" fill="#41a3da"/>
<path d="M830.6 601.6 L833.3 606.3 L827.9 606.3 Z" fill="#41a3da"/>
<path d="M838.8 596.7 L841.5 601.4 L836.1 601.4 Z" fill="#41a3da"/>
<path d="M847.0 595.4 L849.7 600.1 L844.3 600.1 Z" fill="#41a3da"/>
<path d="M855.2 595.4 L857.9 600.1 L852.5 600.1 Z" fill="#41a3da"/>
<path d="M863.4 597.7 L866.1 602.4 L860.7 602.4 Z" fill="#41a3da"/>
<path d="M871.5 600.0 L874.2 604.7 L868.8 604.7 Z" fill="#41a3da"/>
<path d="M879.7 601.9 L882.4 606.6 L877.0 606.6 Z" fill="#41a3da"/>
<path d="M887.9 605.4 L890.6 610.1 L885.2 610.1 Z" fill="#41a3da"/>
<path d="M896.1 607.4 L898.8 612.1 L893.4 612.1 Z" fill="#41a3da"/>
<path d="M904.3 609.7 L907.0 614.4 L901.6 614.4 Z" fill="#41a3da"/>
<path d="M912.5 608.3 L915.2 613.0 L909.8 613.0 Z" fill="#41a3da"/>
<path d="M920.7 605.8 L923.4 610.5 L918.0 610.5 Z" fill="#41a3da"/>
<path d="M928.9 605.1 L931.6 609.8 L926.2 609.8 Z" fill="#41a3da"/>
<path d="M937.1 605.8 L939.8 610.5 L934.4 610.5 Z" fill="#41a3da"/>
<path d="M945.3 604.5 L948.0 609.2 L942.6 609.2 Z" fill="#41a3da"/>
<path d="M953.4 605.4 L956.1 610.1 L950.7 610.1 Z" fill="#41a3da"/>
<path d="M961.6 607.4 L964.3 612.1 L958.9 612.1 Z" fill="#41a3da"/>
<path d="M969.8 607.4 L972.5 612.1 L967.1 612.1 Z" fill="#41a3da"/>
<path d="M978.0 608.9 L980.7 613.6 L975.3 613.6 Z" fill="#41a3da"/>
<path d="M986.2 608.9 L988.9 613.6 L983.5 613.6 Z" fill="#41a3da"/>
<path d="M994.4 608.3 L997.1 613.0 L991.7 613.0 Z" fill="#41a3da"/>
<path d="M1002.6 607.4 L1005.3 612.1 L999.9 612.1 Z" fill="#41a3da"/>
<path d="M1010.8 603.5 L1013.5 608.2 L1008.1 608.2 Z" fill="#41a3da"/>
<path d="M1019.0 599.2 L1021.7 603.9 L1016.3 603.9 Z" fill="#41a3da"/>
<path d="M1027.2 599.6 L1029.9 604.3 L1024.5 604.3 Z" fill="#41a3da"/>
<path d="M1035.3 599.6 L1038.0 604.3 L1032.6 604.3 Z" fill="#41a3da"/>
<path d="M1043.5 600.6 L1046.2 605.3 L1040.8 605.3 Z" fill="#41a3da"/>
<path d="M1051.7 596.7 L1054.4 601.4 L1049.0 601.4 Z" fill="#41a3da"/>
<path d="M1059.9 593.4 L1062.6 598.1 L1057.2 598.1 Z" fill="#41a3da"/>
<path d="M1068.1 599.6 L1070.8 604.3 L1065.4 604.3 Z" fill="#41a3da"/>
<path d="M1076.3 601.2 L1079.0 605.9 L1073.6 605.9 Z" fill="#41a3da"/>
<path d="M1084.5 599.2 L1087.2 603.9 L1081.8 603.9 Z" fill="#41a3da"/>
<path d="M1092.7 596.7 L1095.4 601.4 L1090.0 601.4 Z" fill="#41a3da"/>
<path d="M1100.9 595.7 L1103.6 600.4 L1098.2 600.4 Z" fill="#41a3da"/>
<path d="M1109.1 600.0 L1111.8 604.7 L1106.4 604.7 Z" fill="#41a3da"/>
<path d="M1117.2 600.6 L1120.0 605.3 L1114.5 605.3 Z" fill="#41a3da"/>
<path d="M1125.4 595.4 L1128.1 600.1 L1122.7 600.1 Z" fill="#41a3da"/>
<path d="M1133.6 590.9 L1136.3 595.6 L1130.9 595.6 Z" fill="#41a3da"/>
<path d="M1141.8 589.9 L1144.5 594.6 L1139.1 594.6 Z" fill="#41a3da"/>
<path d="M1150.0 591.5 L1152.7 596.2 L1147.3 596.2 Z" fill="#41a3da"/>
<path d="M1158.2 589.5 L1160.9 594.2 L1155.5 594.2 Z" fill="#41a3da"/>
<path d="M1166.4 589.5 L1169.1 594.2 L1163.7 594.2 Z" fill="#41a3da"/>
<path d="M1174.6 593.4 L1177.3 598.1 L1171.9 598.1 Z" fill="#41a3da"/>
<path d="M1182.8 596.1 L1185.5 600.8 L1180.1 600.8 Z" fill="#41a3da"/>
<path d="M1191.0 601.2 L1193.7 605.9 L1188.3 605.9 Z" fill="#41a3da"/>
<polyline points="85.3,598.3 93.5,577.9 101.7,604.1 109.9,594.4 118.1,610.3 126.3,614.1 134.4,615.1 142.6,579.3 150.8,608.7 159.0,592.4 167.2,615.1 175.4,607.9 183.6,609.9 191.8,620.0 200.0,608.0 208.2,589.0 216.3,615.1 224.5,613.8 232.7,622.9 240.9,608.7 249.1,602.5 257.3,590.1 265.5,598.6 273.7,576.4 281.9,596.7 290.1,608.3 298.2,606.4 306.4,622.9 314.6,593.8 322.8,593.2 331.0,617.6 339.2,612.6 347.4,614.5 355.6,618.0 363.8,603.5 372.0,588.6 380.1,603.5 388.3,546.7 396.5,597.1 404.7,584.1 412.9,620.9 421.1,595.2 429.3,606.4 437.5,601.0 445.7,592.4 453.9,581.2 462.0,598.3 470.2,611.2 478.4,620.0 486.6,615.1 494.8,589.3 503.0,593.2 511.2,599.6 519.4,599.0 527.6,601.0 535.8,602.9 544.0,597.7 552.1,577.7 560.3,589.0 568.5,608.7 576.7,607.4 584.9,606.8 593.1,609.9 601.3,607.4 609.5,609.3 617.7,572.5 625.9,626.2 634.0,603.5 642.2,607.8 650.4,617.0 658.6,606.4 666.8,598.6 675.0,602.1 683.2,599.0 691.4,615.1 699.6,619.6 707.8,614.1 715.9,589.9 724.1,592.8 732.3,602.9 740.5,611.2 748.7,589.9 756.9,619.6 765.1,635.1 773.3,603.5 781.5,613.2 789.6,603.5 797.8,604.5 806.0,605.4 814.2,590.5 822.4,602.5 830.6,606.8 838.8,587.4 847.0,587.4 855.2,611.8 863.4,620.3 871.5,607.4 879.7,614.1 887.9,629.3 896.1,603.5 904.3,600.6 912.5,600.6 920.7,604.5 928.9,606.4 937.1,616.5 945.3,617.6 953.4,612.2 961.6,613.2 969.8,604.5 978.0,612.2 986.2,605.4 994.4,615.7 1002.6,612.6 1010.8,582.2 1019.0,582.8 1027.2,606.8 1035.3,608.7 1043.5,615.7 1051.7,587.4 1059.9,593.2 1068.1,620.0 1076.3,599.0 1084.5,588.0 1092.7,591.9 1100.9,615.1 1109.1,615.7 1117.2,594.4 1125.4,585.5 1133.6,568.0 1141.8,581.2 1150.0,604.1 1158.2,599.0 1166.4,615.7 1174.6,621.5 1182.8,603.5 1191.0,601.6" fill="none" stroke="#8b3dbd" stroke-width="1.1"/>
<circle cx="85.3" cy="598.3" r="1.8" fill="#8b3dbd"/>
<circle cx="93.5" cy="577.9" r="1.8" fill="#8b3dbd"/>
<circle cx="101.7" cy="604.1" r="1.8" fill="#8b3dbd"/>
<circle cx="109.9" cy="594.4" r="1.8" fill="#8b3dbd"/>
<circle cx="118.1" cy="610.3" r="1.8" fill="#8b3dbd"/>
<circle cx="126.3" cy="614.1" r="1.8" fill="#8b3dbd"/>
<circle cx="134.4" cy="615.1" r="1.8" fill="#8b3dbd"/>
<circle cx="142.6" cy="579.3" r="1.8" fill="#8b3dbd"/>
<circle cx="150.8" cy="608.7" r="1.8" fill="#8b3dbd"/>
<circle cx="159.0" cy="592.4" r="1.8" fill="#8b3dbd"/>
<circle cx="167.2" cy="615.1" r="1.8" fill="#8b3dbd"/>
<circle cx="175.4" cy="607.9" r="1.8" fill="#8b3dbd"/>
<circle cx="183.6" cy="609.9" r="1.8" fill="#8b3dbd"/>
<circle cx="191.8" cy="620.0" r="1.8" fill="#8b3dbd"/>
<circle cx="200.0" cy="608.0" r="1.8" fill="#8b3dbd"/>
<circle cx="208.2" cy="589.0" r="1.8" fill="#8b3dbd"/>
<circle cx="216.3" cy="615.1" r="1.8" fill="#8b3dbd"/>
<circle cx="224.5" cy="613.8" r="1.8" fill="#8b3dbd"/>
<circle cx="232.7" cy="622.9" r="1.8" fill="#8b3dbd"/>
<circle cx="240.9" cy="608.7" r="1.8" fill="#8b3dbd"/>
<circle cx="249.1" cy="602.5" r="1.8" fill="#8b3dbd"/>
<circle cx="257.3" cy="590.1" r="1.8" fill="#8b3dbd"/>
<circle cx="265.5" cy="598.6" r="1.8" fill="#8b3dbd"/>
<circle cx="273.7" cy="576.4" r="1.8" fill="#8b3dbd"/>
<circle cx="281.9" cy="596.7" r="1.8" fill="#8b3dbd"/>
<circle cx="290.1" cy="608.3" r="1.8" fill="#8b3dbd"/>
<circle cx="298.2" cy="606.4" r="1.8" fill="#8b3dbd"/>
<circle cx="306.4" cy="622.9" r="1.8" fill="#8b3dbd"/>
<circle cx="314.6" cy="593.8" r="1.8" fill="#8b3dbd"/>
<circle cx="322.8" cy="593.2" r="1.8" fill="#8b3dbd"/>
<circle cx="331.0" cy="617.6" r="1.8" fill="#8b3dbd"/>
<circle cx="339.2" cy="612.6" r="1.8" fill="#8b3dbd"/>
<circle cx="347.4" cy="614.5" r="1.8" fill="#8b3dbd"/>
<circle cx="355.6" cy="618.0" r="1.8" fill="#8b3dbd"/>
<circle cx="363.8" cy="603.5" r="1.8" fill="#8b3dbd"/>
<circle cx="372.0" cy="588.6" r="1.8" fill="#8b3dbd"/>
<circle cx="380.1" cy="603.5" r="1.8" fill="#8b3dbd"/>
<circle cx="388.3" cy="546.7" r="1.8" fill="#8b3dbd"/>
<circle cx="396.5" cy="597.1" r="1.8" fill="#8b3dbd"/>
<circle cx="404.7" cy="584.1" r="1.8" fill="#8b3dbd"/>
<circle cx="412.9" cy="620.9" r="1.8" fill="#8b3dbd"/>
<circle cx="421.1" cy="595.2" r="1.8" fill="#8b3dbd"/>
<circle cx="429.3" cy="606.4" r="1.8" fill="#8b3dbd"/>
<circle cx="437.5" cy="601.0" r="1.8" fill="#8b3dbd"/>
<circle cx="445.7" cy="592.4" r="1.8" fill="#8b3dbd"/>
<circle cx="453.9" cy="581.2" r="1.8" fill="#8b3dbd"/>
<circle cx="462.0" cy="598.3" r="1.8" fill="#8b3dbd"/>
<circle cx="470.2" cy="611.2" r="1.8" fill="#8b3dbd"/>
<circle cx="478.4" cy="620.0" r="1.8" fill="#8b3dbd"/>
<circle cx="486.6" cy="615.1" r="1.8" fill="#8b3dbd"/>
<circle cx="494.8" cy="589.3" r="1.8" fill="#8b3dbd"/>
<circle cx="503.0" cy="593.2" r="1.8" fill="#8b3dbd"/>
<circle cx="511.2" cy="599.6" r="1.8" fill="#8b3dbd"/>
<circle cx="519.4" cy="599.0" r="1.8" fill="#8b3dbd"/>
<circle cx="527.6" cy="601.0" r="1.8" fill="#8b3dbd"/>
<circle cx="535.8" cy="602.9" r="1.8" fill="#8b3dbd"/>
<circle cx="544.0" cy="597.7" r="1.8" fill="#8b3dbd"/>
<circle cx="552.1" cy="577.7" r="1.8" fill="#8b3dbd"/>
<circle cx="560.3" cy="589.0" r="1.8" fill="#8b3dbd"/>
<circle cx="568.5" cy="608.7" r="1.8" fill="#8b3dbd"/>
<circle cx="576.7" cy="607.4" r="1.8" fill="#8b3dbd"/>
<circle cx="584.9" cy="606.8" r="1.8" fill="#8b3dbd"/>
<circle cx="593.1" cy="609.9" r="1.8" fill="#8b3dbd"/>
<circle cx="601.3" cy="607.4" r="1.8" fill="#8b3dbd"/>
<circle cx="609.5" cy="609.3" r="1.8" fill="#8b3dbd"/>
<circle cx="617.7" cy="572.5" r="1.8" fill="#8b3dbd"/>
<circle cx="625.9" cy="626.2" r="1.8" fill="#8b3dbd"/>
<circle cx="634.0" cy="603.5" r="1.8" fill="#8b3dbd"/>
<circle cx="642.2" cy="607.8" r="1.8" fill="#8b3dbd"/>
<circle cx="650.4" cy="617.0" r="1.8" fill="#8b3dbd"/>
<circle cx="658.6" cy="606.4" r="1.8" fill="#8b3dbd"/>
<circle cx="666.8" cy="598.6" r="1.8" fill="#8b3dbd"/>
<circle cx="675.0" cy="602.1" r="1.8" fill="#8b3dbd"/>
<circle cx="683.2" cy="599.0" r="1.8" fill="#8b3dbd"/>
<circle cx="691.4" cy="615.1" r="1.8" fill="#8b3dbd"/>
<circle cx="699.6" cy="619.6" r="1.8" fill="#8b3dbd"/>
<circle cx="707.8" cy="614.1" r="1.8" fill="#8b3dbd"/>
<circle cx="715.9" cy="589.9" r="1.8" fill="#8b3dbd"/>
<circle cx="724.1" cy="592.8" r="1.8" fill="#8b3dbd"/>
<circle cx="732.3" cy="602.9" r="1.8" fill="#8b3dbd"/>
<circle cx="740.5" cy="611.2" r="1.8" fill="#8b3dbd"/>
<circle cx="748.7" cy="589.9" r="1.8" fill="#8b3dbd"/>
<circle cx="756.9" cy="619.6" r="1.8" fill="#8b3dbd"/>
<circle cx="765.1" cy="635.1" r="1.8" fill="#8b3dbd"/>
<circle cx="773.3" cy="603.5" r="1.8" fill="#8b3dbd"/>
<circle cx="781.5" cy="613.2" r="1.8" fill="#8b3dbd"/>
<circle cx="789.6" cy="603.5" r="1.8" fill="#8b3dbd"/>
<circle cx="797.8" cy="604.5" r="1.8" fill="#8b3dbd"/>
<circle cx="806.0" cy="605.4" r="1.8" fill="#8b3dbd"/>
<circle cx="814.2" cy="590.5" r="1.8" fill="#8b3dbd"/>
<circle cx="822.4" cy="602.5" r="1.8" fill="#8b3dbd"/>
<circle cx="830.6" cy="606.8" r="1.8" fill="#8b3dbd"/>
<circle cx="838.8" cy="587.4" r="1.8" fill="#8b3dbd"/>
<circle cx="847.0" cy="587.4" r="1.8" fill="#8b3dbd"/>
<circle cx="855.2" cy="611.8" r="1.8" fill="#8b3dbd"/>
<circle cx="863.4" cy="620.3" r="1.8" fill="#8b3dbd"/>
<circle cx="871.5" cy="607.4" r="1.8" fill="#8b3dbd"/>
<circle cx="879.7" cy="614.1" r="1.8" fill="#8b3dbd"/>
<circle cx="887.9" cy="629.3" r="1.8" fill="#8b3dbd"/>
<circle cx="896.1" cy="603.5" r="1.8" fill="#8b3dbd"/>
<circle cx="904.3" cy="600.6" r="1.8" fill="#8b3dbd"/>
<circle cx="912.5" cy="600.6" r="1.8" fill="#8b3dbd"/>
<circle cx="920.7" cy="604.5" r="1.8" fill="#8b3dbd"/>
<circle cx="928.9" cy="606.4" r="1.8" fill="#8b3dbd"/>
<circle cx="937.1" cy="616.5" r="1.8" fill="#8b3dbd"/>
<circle cx="945.3" cy="617.6" r="1.8" fill="#8b3dbd"/>
<circle cx="953.4" cy="612.2" r="1.8" fill="#8b3dbd"/>
<circle cx="961.6" cy="613.2" r="1.8" fill="#8b3dbd"/>
<circle cx="969.8" cy="604.5" r="1.8" fill="#8b3dbd"/>
<circle cx="978.0" cy="612.2" r="1.8" fill="#8b3dbd"/>
<circle cx="986.2" cy="605.4" r="1.8" fill="#8b3dbd"/>
<circle cx="994.4" cy="615.7" r="1.8" fill="#8b3dbd"/>
<circle cx="1002.6" cy="612.6" r="1.8" fill="#8b3dbd"/>
<circle cx="1010.8" cy="582.2" r="1.8" fill="#8b3dbd"/>
<circle cx="1019.0" cy="582.8" r="1.8" fill="#8b3dbd"/>
<circle cx="1027.2" cy="606.8" r="1.8" fill="#8b3dbd"/>
<circle cx="1035.3" cy="608.7" r="1.8" fill="#8b3dbd"/>
<circle cx="1043.5" cy="615.7" r="1.8" fill="#8b3dbd"/>
<circle cx="1051.7" cy="587.4" r="1.8" fill="#8b3dbd"/>
<circle cx="1059.9" cy="593.2" r="1.8" fill="#8b3dbd"/>
<circle cx="1068.1" cy="620.0" r="1.8" fill="#8b3dbd"/>
<circle cx="1076.3" cy="599.0" r="1.8" fill="#8b3dbd"/>
<circle cx="1084.5" cy="588.0" r="1.8" fill="#8b3dbd"/>
<circle cx="1092.7" cy="591.9" r="1.8" fill="#8b3dbd"/>
<circle cx="1100.9" cy="615.1" r="1.8" fill="#8b3dbd"/>
<circle cx="1109.1" cy="615.7" r="1.8" fill="#8b3dbd"/>
<circle cx="1117.2" cy="594.4" r="1.8" fill="#8b3dbd"/>
<circle cx="1125.4" cy="585.5" r="1.8" fill="#8b3dbd"/>
<circle cx="1133.6" cy="568.0" r="1.8" fill="#8b3dbd"/>
<circle cx="1141.8" cy="581.2" r="1.8" fill="#8b3dbd"/>
<circle cx="1150.0" cy="604.1" r="1.8" fill="#8b3dbd"/>
<circle cx="1158.2" cy="599.0" r="1.8" fill="#8b3dbd"/>
<circle cx="1166.4" cy="615.7" r="1.8" fill="#8b3dbd"/>
<circle cx="1174.6" cy="621.5" r="1.8" fill="#8b3dbd"/>
<circle cx="1182.8" cy="603.5" r="1.8" fill="#8b3dbd"/>
<circle cx="1191.0" cy="601.6" r="1.8" fill="#8b3dbd"/>
</g>
<line x1="35.3" y1="534" x2="35.3" y2="602" stroke="#c8c8c8" stroke-width="4"/>
<line x1="35.3" y1="602" x2="35.3" y2="661" stroke="#444444" stroke-width="4"/>
<line x1="1246.8" y1="534" x2="1246.8" y2="661" stroke="#444444" stroke-width="4"/>
<line x1="95" y1="694" x2="745" y2="694" stroke="#c8c8c8" stroke-width="4"/>
<line x1="745" y1="694" x2="1184" y2="694" stroke="#444444" stroke-width="4"/>
<circle cx="35.3" cy="602.3" r="7.1" fill="#fff" stroke="#444444" stroke-width="1.8"/>
<circle cx="35.3" cy="661.3" r="7.1" fill="#fff" stroke="#444444" stroke-width="1.8"/>
<circle cx="1246.8" cy="534" r="7.1" fill="#fff" stroke="#444444" stroke-width="1.8"/>
<circle cx="1246.8" cy="661" r="7.1" fill="#fff" stroke="#444444" stroke-width="1.8"/>
<circle cx="744.7" cy="694.1" r="7.1" fill="#fff" stroke="#444444" stroke-width="1.8"/>
<circle cx="1184.3" cy="694.2" r="7.1" fill="#fff" stroke="#444444" stroke-width="1.8"/>
</svg>
<div style="position:absolute;right:1202.00px;text-align:right;top:586.84px;font-size:12px;line-height:12px;font-weight:400;color:#605e5c;white-space:nowrap;">200</div>
<div style="position:absolute;right:1202.30px;text-align:right;top:654.54px;font-size:12px;line-height:12px;font-weight:400;color:#605e5c;white-space:nowrap;">0</div>
<div style="position:absolute;left:1204.50px;top:529.94px;font-size:12px;line-height:12px;font-weight:400;color:#605e5c;white-space:nowrap;">2,8</div>
<div style="position:absolute;left:1204.50px;top:572.14px;font-size:12px;line-height:12px;font-weight:400;color:#605e5c;white-space:nowrap;">2,6</div>
<div style="position:absolute;left:1204.50px;top:613.14px;font-size:12px;line-height:12px;font-weight:400;color:#605e5c;white-space:nowrap;">2,4</div>
<div style="position:absolute;left:1204.50px;top:655.14px;font-size:12px;line-height:12px;font-weight:400;color:#605e5c;white-space:nowrap;">2,2</div>
<div style="position:absolute;left:-107.50px;width:600px;text-align:center;top:666.54px;font-size:12px;line-height:12px;font-weight:400;color:#605e5c;white-space:nowrap;">Mai 2025</div>
<div style="position:absolute;left:146.80px;width:600px;text-align:center;top:666.54px;font-size:12px;line-height:12px;font-weight:400;color:#605e5c;white-space:nowrap;">Jun 2025</div>
<div style="position:absolute;left:392.40px;width:600px;text-align:center;top:666.54px;font-size:12px;line-height:12px;font-weight:400;color:#605e5c;white-space:nowrap;">Jul 2025</div>
<div style="position:absolute;left:646.00px;width:600px;text-align:center;top:666.54px;font-size:12px;line-height:12px;font-weight:400;color:#605e5c;white-space:nowrap;">Aug 2025</div>
<div style="position:absolute;left:339.80px;width:600px;text-align:center;top:705.54px;font-size:12px;line-height:12px;font-weight:400;color:#252423;white-space:nowrap;">Date</div>
<div style="position:absolute;left:-30px;top:591px;width:100px;height:12px;line-height:12px;font-size:12px;color:#252423;text-align:center;transform:rotate(-90deg);transform-origin:50% 50%;white-space:nowrap;">Trips</div>
<div style="position:absolute;left:1196px;top:592px;width:140px;height:12px;line-height:12px;font-size:12px;color:#252423;text-align:left;transform:rotate(-90deg);transform-origin:50% 50%;white-space:nowrap;">DTTR and DTTR ( Rollin…</div>
</body></html>
